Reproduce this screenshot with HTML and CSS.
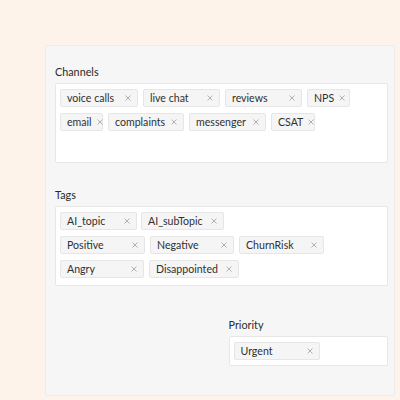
FILE: index.html
```html
<!DOCTYPE html>
<html>
<head>
<meta charset="utf-8">
<link rel="stylesheet" href="styles.css">
</head>
<body>
<div class="panel">
  <div class="field">
    <div class="label">Channels</div>
    <div class="box">
      <div class="row">
        <span class="chip w78"><span>voice calls</span><svg class="x" viewBox="0 0 6 6"><path d="M0.5 0.5L5.5 5.5M5.5 0.5L0.5 5.5"/></svg></span>
        <span class="chip w77"><span>live chat</span><svg class="x" viewBox="0 0 6 6"><path d="M0.5 0.5L5.5 5.5M5.5 0.5L0.5 5.5"/></svg></span>
        <span class="chip w77"><span>reviews</span><svg class="x" viewBox="0 0 6 6"><path d="M0.5 0.5L5.5 5.5M5.5 0.5L0.5 5.5"/></svg></span>
        <span class="chip w43"><span>NPS</span><svg class="x" viewBox="0 0 6 6"><path d="M0.5 0.5L5.5 5.5M5.5 0.5L0.5 5.5"/></svg></span>
      </div>
      <div class="row">
        <span class="chip w43"><span>email</span><svg class="x" viewBox="0 0 6 6"><path d="M0.5 0.5L5.5 5.5M5.5 0.5L0.5 5.5"/></svg></span>
        <span class="chip w76"><span>complaints</span><svg class="x" viewBox="0 0 6 6"><path d="M0.5 0.5L5.5 5.5M5.5 0.5L0.5 5.5"/></svg></span>
        <span class="chip w77"><span>messenger</span><svg class="x" viewBox="0 0 6 6"><path d="M0.5 0.5L5.5 5.5M5.5 0.5L0.5 5.5"/></svg></span>
        <span class="chip w44"><span>CSAT</span><svg class="x" viewBox="0 0 6 6"><path d="M0.5 0.5L5.5 5.5M5.5 0.5L0.5 5.5"/></svg></span>
      </div>
    </div>
  </div>
  <div class="field tags">
    <div class="label">Tags</div>
    <div class="box">
      <div class="row tight">
        <span class="chip w77"><span>AI_topic</span><svg class="x" viewBox="0 0 6 6"><path d="M0.5 0.5L5.5 5.5M5.5 0.5L0.5 5.5"/></svg></span>
        <span class="chip w83"><span>AI_subTopic</span><svg class="x" viewBox="0 0 6 6"><path d="M0.5 0.5L5.5 5.5M5.5 0.5L0.5 5.5"/></svg></span>
      </div>
      <div class="row">
        <span class="chip w85"><span>Positive</span><svg class="x" viewBox="0 0 6 6"><path d="M0.5 0.5L5.5 5.5M5.5 0.5L0.5 5.5"/></svg></span>
        <span class="chip w84"><span>Negative</span><svg class="x" viewBox="0 0 6 6"><path d="M0.5 0.5L5.5 5.5M5.5 0.5L0.5 5.5"/></svg></span>
        <span class="chip w85"><span>ChurnRisk</span><svg class="x" viewBox="0 0 6 6"><path d="M0.5 0.5L5.5 5.5M5.5 0.5L0.5 5.5"/></svg></span>
      </div>
      <div class="row">
        <span class="chip w84"><span>Angry</span><svg class="x" viewBox="0 0 6 6"><path d="M0.5 0.5L5.5 5.5M5.5 0.5L0.5 5.5"/></svg></span>
        <span class="chip w90"><span>Disappointed</span><svg class="x" viewBox="0 0 6 6"><path d="M0.5 0.5L5.5 5.5M5.5 0.5L0.5 5.5"/></svg></span>
      </div>
    </div>
  </div>
  <div class="grid">
    <div></div>
    <div class="field priority">
      <div class="label">Priority</div>
      <div class="box small">
        <div class="row">
          <span class="chip w86"><span>Urgent</span><svg class="x" viewBox="0 0 6 6"><path d="M0.5 0.5L5.5 5.5M5.5 0.5L0.5 5.5"/></svg></span>
        </div>
      </div>
    </div>
  </div>
</div>
</body>
</html>
```

FILE: styles.css
```css
html, body {
  margin: 0;
  padding: 0;
  background: #fdf3ea;
  font-family: Lato, "Liberation Sans", sans-serif;
  color: #2a2a2a;
}
.panel {
  box-sizing: border-box;
  width: 350px;
  height: 351px;
  margin: 45px 0 0 45px;
  padding: 19px 6px 0 9px;
  background: #f6f6f6;
  border: 1px solid #ececec;
  border-radius: 2px;
}
.label {
  font-size: 10.8px;
  line-height: 14px;
  height: 14px;
  margin-bottom: 4px;
}
.box {
  box-sizing: border-box;
  min-height: 80px;
  background: #fff;
  border: 1px solid #e7e7e7;
  border-radius: 2px;
  padding: 5px 4px;
  display: flex;
  flex-direction: column;
  row-gap: 6px;
}
.box.small {
  min-height: 29px;
}
.row {
  display: flex;
  column-gap: 5px;
}
.row.tight { column-gap: 4px; }
.tags { margin-top: 25px; }
.grid {
  display: grid;
  grid-template-columns: 1fr 1fr;
  column-gap: 14px;
  margin-top: 32px;
}
.chip {
  box-sizing: border-box;
  height: 18px;
  display: inline-flex;
  align-items: center;
  justify-content: space-between;
  gap: 5px;
  padding: 0 4px 0 6px;
  background: #f5f5f5;
  border: 1px solid #e6e6e6;
  border-radius: 2px;
  font-size: 10.6px;
  color: #303030;
  white-space: nowrap;
}
.x {
  width: 6px;
  height: 6px;
  margin-right: 2px;
  flex: none;
  fill: none;
  stroke: #aaa;
  stroke-width: 0.9;
}
.w43 { width: 43px; }
.w44 { width: 44px; }
.w76 { width: 76px; }
.w77 { width: 77px; }
.w78 { width: 78px; }
.w83 { width: 83px; }
.w84 { width: 84px; }
.w85 { width: 85px; }
.w86 { width: 86px; }
.w90 { width: 90px; }
```
